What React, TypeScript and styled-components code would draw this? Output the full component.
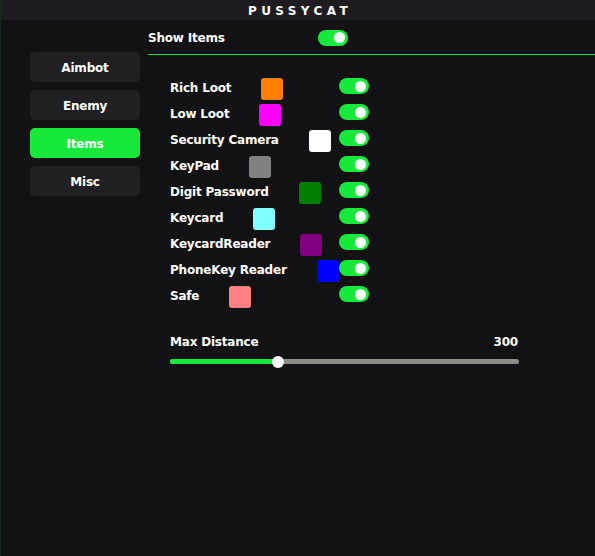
import styled, { createGlobalStyle } from "styled-components";

const GREEN = "#17e83c";

type ItemRow = { label: string; color: string };

const items: ItemRow[] = [
  { label: "Rich Loot", color: "#ff8000" },
  { label: "Low Loot", color: "#ff00ff" },
  { label: "Security Camera", color: "#ffffff" },
  { label: "KeyPad", color: "#808080" },
  { label: "Digit Password", color: "#008000" },
  { label: "Keycard", color: "#80ffff" },
  { label: "KeycardReader", color: "#800080" },
  { label: "PhoneKey Reader", color: "#0000ff" },
  { label: "Safe", color: "#ff8080" },
];

const tabs = ["Aimbot", "Enemy", "Items", "Misc"];

const maxDistance = 300;
const distanceLimit = 970;

const GlobalStyle = createGlobalStyle`
  html, body {
    margin: 0;
    padding: 0;
    background: #121214;
  }
  body {
    font-family: "DejaVu Sans", Verdana, sans-serif;
    font-weight: 700;
    font-size: 12px;
    letter-spacing: -0.2px;
    color: #ffffff;
  }
`;

function Toggle({ on }: { on: boolean }) {
  return (
    <Switch $on={on}>
      <Knob />
    </Switch>
  );
}

function App() {
  const pct = (maxDistance / distanceLimit) * 100;

  return (
    <>
      <GlobalStyle />
      <Window>
        <TitleBar>PUSSYCAT</TitleBar>
        <Body>
          <Sidebar>
            {tabs.map((t) => (
              <TabButton key={t} $active={t === "Items"}>
                {t}
              </TabButton>
            ))}
          </Sidebar>
          <Content>
            <Header>
              <HeaderLabel>Show Items</HeaderLabel>
              <Toggle on />
            </Header>
            <List>
              {items.map((it) => (
                <Row key={it.label}>
                  <LabelGroup>
                    <Label>{it.label}</Label>
                    <Swatch $color={it.color} />
                  </LabelGroup>
                  <Toggle on />
                </Row>
              ))}
            </List>
            <SliderBlock>
              <SliderHead>
                <span>Max Distance</span>
                <span>{maxDistance}</span>
              </SliderHead>
              <Track>
                <Fill style={{ width: `${pct}%` }} />
                <Thumb style={{ left: `${pct}%` }} />
              </Track>
            </SliderBlock>
          </Content>
        </Body>
      </Window>
    </>
  );
}

export default App;

const Window = styled.div`
  width: 595px;
  height: 556px;
  display: flex;
  flex-direction: column;
  background: #121214;
  border-left: 1px solid #1a2620;
  box-sizing: border-box;
  overflow: hidden;
`;

const TitleBar = styled.div`
  height: 20px;
  flex: 0 0 auto;
  display: flex;
  align-items: center;
  justify-content: center;
  background: #1e1c21;
  font-size: 12px;
  letter-spacing: 4.4px;
  padding: 1px 0 0 4px;
  box-sizing: border-box;
`;

const Body = styled.div`
  flex: 1 1 auto;
  display: flex;
  gap: 8px;
`;

const Sidebar = styled.div`
  display: flex;
  flex-direction: column;
  gap: 8px;
  padding: 32px 0 0 29px;
`;

const TabButton = styled.div<{ $active?: boolean }>`
  width: 110px;
  height: 30px;
  display: flex;
  align-items: center;
  justify-content: center;
  padding-top: 2px;
  box-sizing: border-box;
  border-radius: 5px;
  background: ${(p) => (p.$active ? GREEN : "#202022")};
  font-size: 12px;
`;

const Content = styled.div`
  flex: 1 1 auto;
  display: flex;
  flex-direction: column;
`;

const Header = styled.div`
  height: 33px;
  display: flex;
  align-items: center;
  border-bottom: 1px solid ${GREEN};
  padding-top: 1px;
`;

const HeaderLabel = styled.span`
  width: 170px;
  padding-top: 1px;
`;

const List = styled.div`
  display: flex;
  flex-direction: column;
  gap: 4px;
  padding: 23px 0 0 22px;
`;

const Row = styled.div`
  height: 22px;
  display: grid;
  grid-template-columns: 169px 30px;
  align-items: start;
`;

const LabelGroup = styled.div`
  display: flex;
  align-items: flex-start;
  gap: 30px;
  white-space: nowrap;
`;

const Label = styled.span`
  line-height: 18px;
  padding-top: 1px;
`;

const Swatch = styled.div<{ $color: string }>`
  width: 22px;
  height: 22px;
  flex-shrink: 0;
  border-radius: 3px;
  background: ${(p) => p.$color};
`;

const Switch = styled.div<{ $on: boolean }>`
  width: 30px;
  height: 16px;
  border-radius: 8px;
  background: ${(p) => (p.$on ? GREEN : "#3a3a3c")};
  display: flex;
  align-items: center;
  justify-content: ${(p) => (p.$on ? "flex-end" : "flex-start")};
  padding: 0 3px;
  box-sizing: border-box;
`;

const Knob = styled.div`
  width: 11px;
  height: 11px;
  border-radius: 50%;
  background: #ffffff;
`;

const SliderBlock = styled.div`
  width: 349px;
  margin: 25px 0 0 22px;
  display: flex;
  flex-direction: column;
  gap: 9px;
`;

const SliderHead = styled.div`
  display: flex;
  justify-content: space-between;
  line-height: 16px;
  padding: 1px 1px 0 0;
`;

const Track = styled.div`
  position: relative;
  height: 5px;
  border-radius: 3px;
  background: #8c8c88;
`;

const Fill = styled.div`
  height: 100%;
  border-radius: 3px 0 0 3px;
  background: ${GREEN};
`;

const Thumb = styled.div`
  position: absolute;
  top: 50%;
  width: 12px;
  height: 12px;
  border-radius: 50%;
  background: #ffffff;
  transform: translate(-50%, -50%);
`;
